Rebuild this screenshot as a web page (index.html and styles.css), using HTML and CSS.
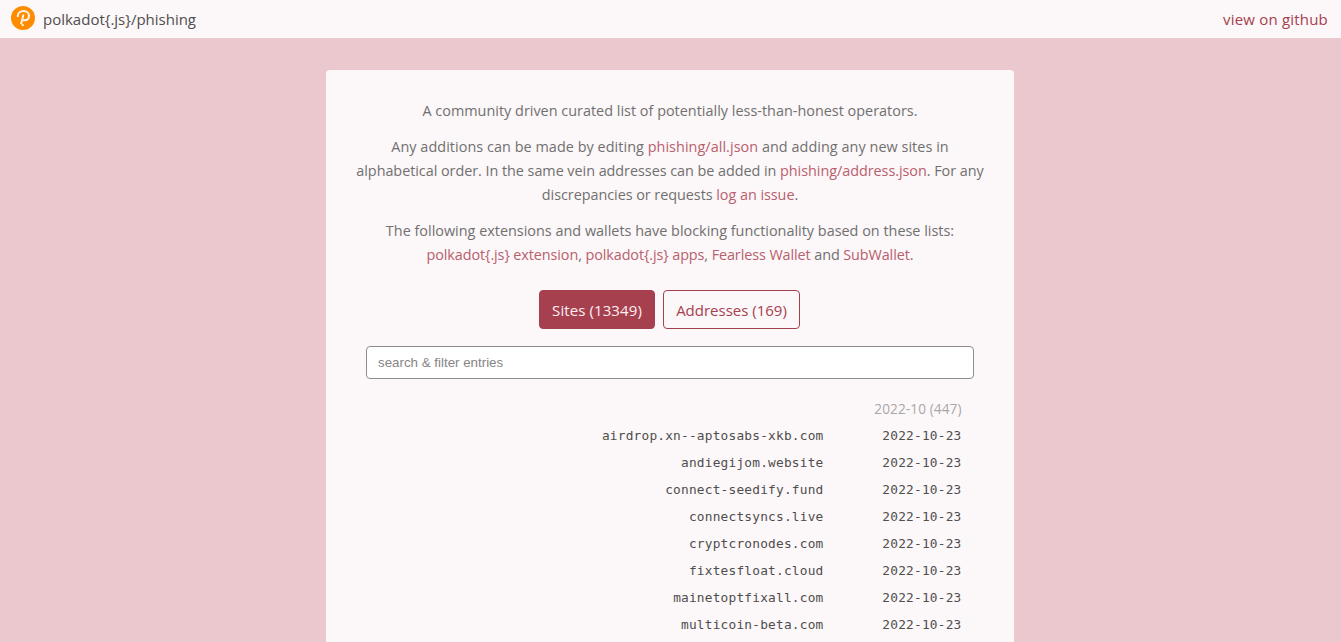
FILE: index.html
```html
<!DOCTYPE html>
<html lang="en">
<head>
<meta charset="utf-8">
<title>polkadot{.js}/phishing</title>
<link rel="stylesheet" href="styles.css">
</head>
<body>
<header class="header">
  <div class="brand">
    <svg class="logo" viewBox="0 0 24 24" width="24" height="24" aria-hidden="true">
      <circle cx="12" cy="12" r="12" fill="#ff8c00"/>
      <path d="M6.800 10.200C6.800 7 9.300 5 12.600 5C16 5 18 7.100 18 9.800C18 12.500 16 14.300 13.200 14.300H11.400M12.300 9.200L10.200 17.300" fill="none" stroke="#fff4e6" stroke-width="2" stroke-linecap="round" stroke-linejoin="round"/>
      <circle cx="11.700" cy="19" r="1.200" fill="#fff4e6"/>
    </svg>
    <span class="brand-name">polkadot{.js}/phishing</span>
  </div>
  <a class="github">view on github</a>
</header>
<main class="card">
  <section class="intro">
    <p><span class="l1">A community driven curated list of potentially less-than-honest operators.</span></p>
    <p><span class="l2">Any additions can be made by editing <a>phishing/all.json</a> and adding any new sites in</span><br>
    <span class="l3">alphabetical order. In the same vein addresses can be added in <a>phishing/address.json</a>. For any</span><br>
    <span class="l4">discrepancies or requests <a>log an issue</a>.</span></p>
    <p><span class="l5">The following extensions and wallets have blocking functionality based on these lists:</span><br>
    <span class="l6"><a>polkadot{.js} extension</a>, <a>polkadot{.js} apps</a>, <a>Fearless Wallet</a> and <a>SubWallet</a>.</span></p>
  </section>
  <div class="tabs">
    <button class="tab tab-sites active">Sites (13349)</button>
    <button class="tab tab-addresses">Addresses (169)</button>
  </div>
  <input class="search" type="text" placeholder="search &amp; filter entries">
  <div class="list">
    <div class="month">2022-10 (447)</div>
    <div class="row"><span>airdrop.xn--aptosabs-xkb.com</span><span>2022-10-23</span></div>
    <div class="row"><span>andiegijom.website</span><span>2022-10-23</span></div>
    <div class="row"><span>connect-seedify.fund</span><span>2022-10-23</span></div>
    <div class="row"><span>connectsyncs.live</span><span>2022-10-23</span></div>
    <div class="row"><span>cryptcronodes.com</span><span>2022-10-23</span></div>
    <div class="row"><span>fixtesfloat.cloud</span><span>2022-10-23</span></div>
    <div class="row"><span>mainetoptfixall.com</span><span>2022-10-23</span></div>
    <div class="row"><span>multicoin-beta.com</span><span>2022-10-23</span></div>
  </div>
</main>
</body>
</html>
```
FILE: styles.css
```css
* { box-sizing: border-box; }
body {
  margin: 0;
  height: 642px;
  overflow: hidden;
  background: #eac8ce;
  color: #4e4e4e;
  font-family: "Open Sans", "Noto Sans", sans-serif;
}
a { color: #a6404f; text-decoration: none; }
.header {
  display: flex;
  align-items: center;
  justify-content: space-between;
  height: 38px;
  padding: 0 13px 0 11px;
  background: #fcf7f8;
  font-size: 15px;
}
.github { letter-spacing: 0.2px; }
.brand { display: flex; align-items: center; gap: 8px; }
.logo { display: block; margin-top: -2px; }
.card {
  width: 688px;
  height: 600px;
  margin: 32px 0 0 326px;
  padding: 29px 28px 0;
  background: #fcf7f8;
  border-radius: 4px;
}
.intro {
  color: #707070;
  font-size: 14.4px;
  font-weight: 400;
  line-height: 24px;
  text-align: center;
  white-space: nowrap;
}
.intro a { color: #b8606e; }
.intro p { margin: 0 0 12px; }
.l1 { letter-spacing: 0.015px; }
.l2 { letter-spacing: 0.055px; }
.l3 { letter-spacing: -0.04px; }
.l4 { letter-spacing: -0.04px; }
.l5 { letter-spacing: 0.01px; }
.l6 { letter-spacing: -0.09px; }
.tabs {
  display: flex;
  justify-content: center;
  gap: 8px;
  margin: 23px 0 17px;
  padding-right: 1px;
}
.tab {
  height: 39px;
  padding: 1px 0 0;
  border: 1px solid #a6404f;
  border-radius: 4px;
  background: transparent;
  color: #a6404f;
  font-family: inherit;
  font-size: 15px;
  white-space: nowrap;
}
.tab-sites { width: 116px; letter-spacing: 0.1px; }
.tab-addresses { width: 137px; }
.active { background: #a6404f; color: #fdf0f2; }
.search {
  display: block;
  width: 608px;
  height: 33px;
  margin: 0 12px;
  padding: 0 11px;
  border: 1px solid #8e8e8e;
  border-radius: 4px;
  background: #fff;
  font: 13.33px "Liberation Sans", Arial, sans-serif;
}
.search::placeholder { color: #858585; }
.list { padding: 16px 24.5px 0 0; }
.month {
  height: 27px;
  line-height: 27px;
  text-align: right;
  font-size: 13.6px;
  letter-spacing: 0.1px;
  color: #a9a7a8;
}
.row {
  display: grid;
  grid-template-columns: 1fr 138px;
  height: 27px;
  line-height: 27px;
  text-align: right;
  font-family: "DejaVu Sans Mono", monospace;
  font-size: 12.8px;
  letter-spacing: 0.21px;
}
```
